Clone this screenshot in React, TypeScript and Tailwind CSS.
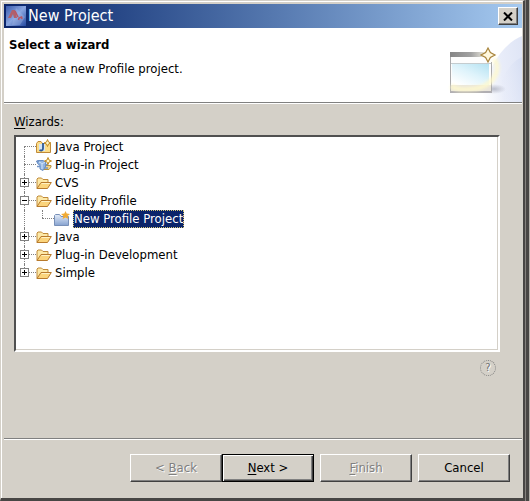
import { useState, type ReactNode } from "react";

const raised =
  "border border-t-white border-l-white border-r-[#404040] border-b-[#404040] shadow-[inset_-1px_-1px_0_#808080]";

const mnemonic = "underline decoration-1 underline-offset-2";

function AppIcon() {
  return (
    <svg width="20" height="20" viewBox="0 0 20 20" aria-hidden="true">
      <defs>
        <linearGradient id="appBg" x1="0" y1="0" x2="1" y2="1">
          <stop offset="0" stopColor="#3a5cae" />
          <stop offset="0.5" stopColor="#8aa6e0" />
          <stop offset="1" stopColor="#2348a0" />
        </linearGradient>
      </defs>
      <rect width="20" height="20" fill="url(#appBg)" />
      <path d="M10 2 L19 11 L14 19 L6 19 Z" fill="#a9bde8" opacity="0.35" />
      <path d="M2 12 L6 4 L9 4 L11 12 L8 12 L7 8 L5 12 Z" fill="#b0606c" />
      <path d="M9 5 L12 11 M12.5 14 L13 12 L15.5 11 L16 13" fill="none" stroke="#b85866" strokeWidth="1.6" />
    </svg>
  );
}

function WizardBanner() {
  return (
    <svg width="80" height="74" viewBox="0 0 80 74" aria-hidden="true">
      <defs>
        <linearGradient id="swoosh" x1="1" y1="0.4" x2="0" y2="0.6">
          <stop offset="0" stopColor="#e0e6f6" />
          <stop offset="0.5" stopColor="#e9edf9" />
          <stop offset="1" stopColor="#ffffff" />
        </linearGradient>
        <linearGradient id="swooshInner" x1="1" y1="0" x2="0" y2="0.4">
          <stop offset="0" stopColor="#d6def3" />
          <stop offset="1" stopColor="#e9edf9" stopOpacity="0" />
        </linearGradient>
        <linearGradient id="bar" x1="0" x2="1" y1="0" y2="0">
          <stop offset="0" stopColor="#858585" />
          <stop offset="0.6" stopColor="#a2a2a2" />
          <stop offset="1" stopColor="#e8e6dc" />
        </linearGradient>
        <linearGradient id="pane" x1="1" x2="0.2" y1="0" y2="1">
          <stop offset="0" stopColor="#b4e2f2" />
          <stop offset="0.5" stopColor="#def3fb" />
          <stop offset="1" stopColor="#ffffff" />
        </linearGradient>
        <radialGradient id="shade">
          <stop offset="0" stopColor="#a4a8b8" stopOpacity="0.7" />
          <stop offset="1" stopColor="#a4a8b8" stopOpacity="0" />
        </radialGradient>
        <filter id="soft" x="-20%" y="-20%" width="140%" height="140%">
          <feGaussianBlur stdDeviation="1.4" />
        </filter>
      </defs>
      <path d="M80 8 C60 16 45 40 38 74 L80 74 Z" fill="url(#swoosh)" />
      <path d="M80 29 C68 34 58 50 54 74 L80 74 Z" fill="url(#swooshInner)" />
      <ellipse cx="52" cy="61" rx="12" ry="5" fill="url(#shade)" />
      <rect x="8" y="24" width="42" height="40" fill="#fdfdfd" />
      <path d="M8.5 24 V64 M49.5 34 V64" stroke="#aaaaac" />
      <rect x="8" y="24" width="35" height="5" fill="url(#bar)" />
      <rect x="9" y="35" width="40" height="1" fill="#c4cccf" />
      <rect x="10" y="36" width="37" height="21" fill="url(#pane)" />
      <rect x="9" y="57" width="40" height="6" fill="#e9e5dc" />
      <rect x="8" y="63" width="42" height="2" fill="#b0aeb2" />
      <path
        d="M52 31 C61 42 50 60 30 61 C20 62 13 61 9 58"
        fill="none"
        stroke="#fff9cc"
        strokeWidth="5"
        opacity="0.8"
        filter="url(#soft)"
      />
      <path
        d="M46 20 L48.4 24.6 L53 27 L48.4 29.4 L46 34 L43.6 29.4 L39 27 L43.6 24.6 Z"
        fill="#fff8de"
        stroke="#a8843c"
        strokeWidth="1.2"
      />
    </svg>
  );
}

function FolderIcon() {
  return (
    <svg width="16" height="16" viewBox="0 0 16 16" aria-hidden="true">
      <path d="M1 13.5 V4 L2 3 H5.5 L7 4.5 H12 V7.5" fill="#fde9a8" stroke="#c08a38" />
      <path d="M1 13.5 L5 7.5 H15.3 L11.5 13.5 Z" fill="#fbd47c" stroke="#b87a2c" />
      <path d="M5.6 8.5 H13.8" stroke="#fff2c4" />
    </svg>
  );
}

function Sparkle({ x, y }: { x: number; y: number }) {
  return (
    <path
      transform={`translate(${x} ${y})`}
      d="M0 -3.5 L1 -1 L3.5 0 L1 1 L0 3.5 L-1 1 L-3.5 0 L-1 -1 Z"
      fill="#fff6c8"
      stroke="#c08a24"
    />
  );
}

function JavaProjectIcon() {
  return (
    <svg width="16" height="16" viewBox="0 0 16 16" aria-hidden="true">
      <path d="M0.5 13.5 V4.5 L2 2.5 H5 L6.5 4.5 H14.5 V13.5 Z" fill="#fbdc88" stroke="#c08a38" />
      <rect x="3" y="5" width="6" height="7" fill="#d3e4f6" />
      <path d="M7 4 V9.5 C7 11.5 5 12 3.5 11" fill="none" stroke="#2f5a96" strokeWidth="1.8" />
      <Sparkle x={11.5} y={4} />
    </svg>
  );
}

function PluginProjectIcon() {
  return (
    <svg width="16" height="16" viewBox="0 0 16 16" aria-hidden="true">
      <path d="M5 8.5 H15 V10 L13 12.5 H6 Z" fill="#f2d488" stroke="#b8923c" />
      <path d="M1.5 3.5 H7 L9.5 5 V10 L7 13.5 L4 12 V8.5 L1.5 6.5 Z" fill="#8fb2e0" stroke="#6a8fc4" />
      <path d="M3 5 L6 6.5 L9 5.5 M6 7 V12" fill="none" stroke="#d4e6fa" />
      <path d="M0 4.5 H3 M1 9.5 H4 M9 7.5 H12 M8 11 H12" stroke="#7395c6" strokeWidth="1.4" />
      <Sparkle x={12} y={4} />
    </svg>
  );
}

function ProfileProjectIcon() {
  return (
    <svg width="16" height="16" viewBox="0 0 16 16" aria-hidden="true">
      <defs>
        <linearGradient id="blueFolder" x1="0" y1="0" x2="0" y2="1">
          <stop offset="0" stopColor="#e4ecf8" />
          <stop offset="1" stopColor="#86a2d0" />
        </linearGradient>
      </defs>
      <path d="M0.5 14.5 V4.5 L1.5 3.5 H5.5 L7 5.5 H14.5 V14.5 Z" fill="url(#blueFolder)" stroke="#7890b8" />
      <path
        d="M11.5 0 L12.7 2.6 L16 3 L13.6 5 L14.4 8 L11.5 6.4 L8.6 8 L9.4 5 L7 3 L10.3 2.6 Z"
        fill="#f0aa34"
      />
    </svg>
  );
}

type Item = {
  label: string;
  icon: ReactNode;
  expandable?: boolean;
  children?: string[];
};

const items: Item[] = [
  { label: "Java Project", icon: <JavaProjectIcon /> },
  { label: "Plug-in Project", icon: <PluginProjectIcon /> },
  { label: "CVS", icon: <FolderIcon />, expandable: true },
  { label: "Fidelity Profile", icon: <FolderIcon />, expandable: true, children: ["New Profile Project"] },
  { label: "Java", icon: <FolderIcon />, expandable: true },
  { label: "Plug-in Development", icon: <FolderIcon />, expandable: true },
  { label: "Simple", icon: <FolderIcon />, expandable: true },
];

function Gutter({ children, line }: { children?: ReactNode; line: string }) {
  return (
    <span className="relative h-full w-5 shrink-0">
      <span className={`absolute left-2 border-l border-dotted border-[#808080] ${line}`} />
      <span className="absolute left-2 top-2 w-3 border-t border-dotted border-[#808080]" />
      {children}
    </span>
  );
}

function Tree() {
  const [open, setOpen] = useState(true);
  return (
    <ul
      role="tree"
      aria-labelledby="wizards-label"
      className="flex-1 border-2 border-t-[#505050] border-l-[#505050] border-r-white border-b-white bg-white pt-px shadow-[inset_-1px_-1px_0_#d4d0c8]"
    >
      {items.map((item, i) => {
        const expanded = Boolean(item.children) && open;
        const line = i === 0 ? "top-2 bottom-0" : i === items.length - 1 ? "top-0 h-2" : "inset-y-0";
        return (
          <li key={item.label} role="treeitem" aria-expanded={item.expandable ? expanded : undefined}>
            <div className="flex h-[18px] items-center">
              <Gutter line={line}>
                {item.expandable && (
                  <button
                    type="button"
                    aria-label={expanded ? "Collapse" : "Expand"}
                    onClick={() => item.children && setOpen(!open)}
                    className="absolute left-1 top-1 size-[9px] border border-[#808080] bg-white"
                  >
                    <span className="absolute left-px top-[3px] h-px w-[5px] bg-black" />
                    {!expanded && <span className="absolute left-[3px] top-px h-[5px] w-px bg-black" />}
                  </button>
                )}
              </Gutter>
              {item.icon}
              <span className="px-[3px]">{item.label}</span>
            </div>
            {expanded && (
              <ul role="group">
                {item.children!.map((child) => (
                  <li key={child} role="treeitem" aria-selected="true" className="flex h-[18px] items-center">
                    <span className="relative h-full w-[18px]">
                      <span className="absolute inset-y-0 left-2 border-l border-dotted border-[#808080]" />
                    </span>
                    <Gutter line="top-0 h-2" />
                    <ProfileProjectIcon />
                    <span className="ml-[3px] h-[18px] border border-dotted border-[#d8c878] bg-[#0a246a] leading-4 text-white">
                      {child}
                    </span>
                  </li>
                ))}
              </ul>
            )}
          </li>
        );
      })}
    </ul>
  );
}

function DialogButton({ children, disabled }: { children: ReactNode; disabled?: boolean }) {
  return (
    <button
      type="button"
      disabled={disabled}
      className={`h-7 w-[92px] bg-[#d4d0c8] text-black disabled:text-[#808080] disabled:[text-shadow:1px_1px_0_#ffffff] ${raised}`}
    >
      {children}
    </button>
  );
}

export default function App() {
  return (
    <div className="flex min-h-screen border-r border-[#b4b1aa] bg-[#d4d0c8] font-['DejaVu_Sans_Condensed','DejaVu_Sans',sans-serif] text-[13px] leading-[18px] text-black">
      <div className="flex flex-1 border-r-3 border-[#484644]">
        <div className="flex flex-1 border-r border-[#85827e]">
          <div className="flex flex-1 flex-col border-t border-l border-[#d4d0c8] border-r-2 border-b-3 border-r-[#484644] border-b-[#484644]">
            <div className="flex flex-1 flex-col border-t border-l border-white border-r border-r-[#d4d0c8] pt-0.5 pl-0.5">
              <header className="flex h-6 items-center bg-linear-to-r from-[#0a246a] to-[#a6caf0] pr-1 pl-0.5">
                <AppIcon />
                <h1 className="flex-1 pl-0.5 text-base text-white">New Project</h1>
                <button
                  type="button"
                  aria-label="Close"
                  className={`flex h-[18px] w-5 items-center justify-center bg-[#d4d0c8] ${raised}`}
                >
                  <svg width="10" height="9" viewBox="0 0 10 9" aria-hidden="true">
                    <path d="M1 0.5 L9 8.5 M9 0.5 L1 8.5" stroke="#000" strokeWidth="2" />
                  </svg>
                </button>
              </header>

              <section className="flex justify-between border-b border-[#808080] bg-white">
                <div className="pt-2 pl-[5px]">
                  <h2 className="font-bold">Select a wizard</h2>
                  <p className="pt-1.5 pl-2">Create a new Profile project.</p>
                </div>
                <WizardBanner />
              </section>

              <main className="flex flex-1 flex-col border-t border-white pr-[22px] pl-2.5 pt-[9px]">
                <div id="wizards-label" className="pb-1">
                  <span className={mnemonic}>W</span>izards:
                </div>
                <Tree />
                <div className="flex h-[86px] justify-end pt-2 pr-1">
                  <button
                    type="button"
                    disabled
                    aria-label="Help"
                    className="size-4 rounded-full border border-dotted border-[#808080] text-[11px] leading-[14px] text-[#707070] [text-shadow:1px_1px_0_#ffffff]"
                  >
                    ?
                  </button>
                </div>
              </main>

              <footer className="flex justify-end gap-1.5 border-t border-[#808080] pt-[15px] pr-3 pb-4 shadow-[inset_0_1px_0_#ffffff]">
                <div className="flex">
                  <DialogButton disabled>
                    &lt; <span className={mnemonic}>B</span>ack
                  </DialogButton>
                  <button
                    type="button"
                    className="h-7 w-[92px] border border-black bg-[#d4d0c8] shadow-[inset_1px_1px_0_#ffffff,inset_-1px_-1px_0_#404040,inset_-2px_-2px_0_#808080]"
                  >
                    <span className={mnemonic}>N</span>ext &gt;
                  </button>
                </div>
                <DialogButton disabled>
                  <span className={mnemonic}>F</span>inish
                </DialogButton>
                <DialogButton>Cancel</DialogButton>
              </footer>
            </div>
          </div>
        </div>
      </div>
    </div>
  );
}
